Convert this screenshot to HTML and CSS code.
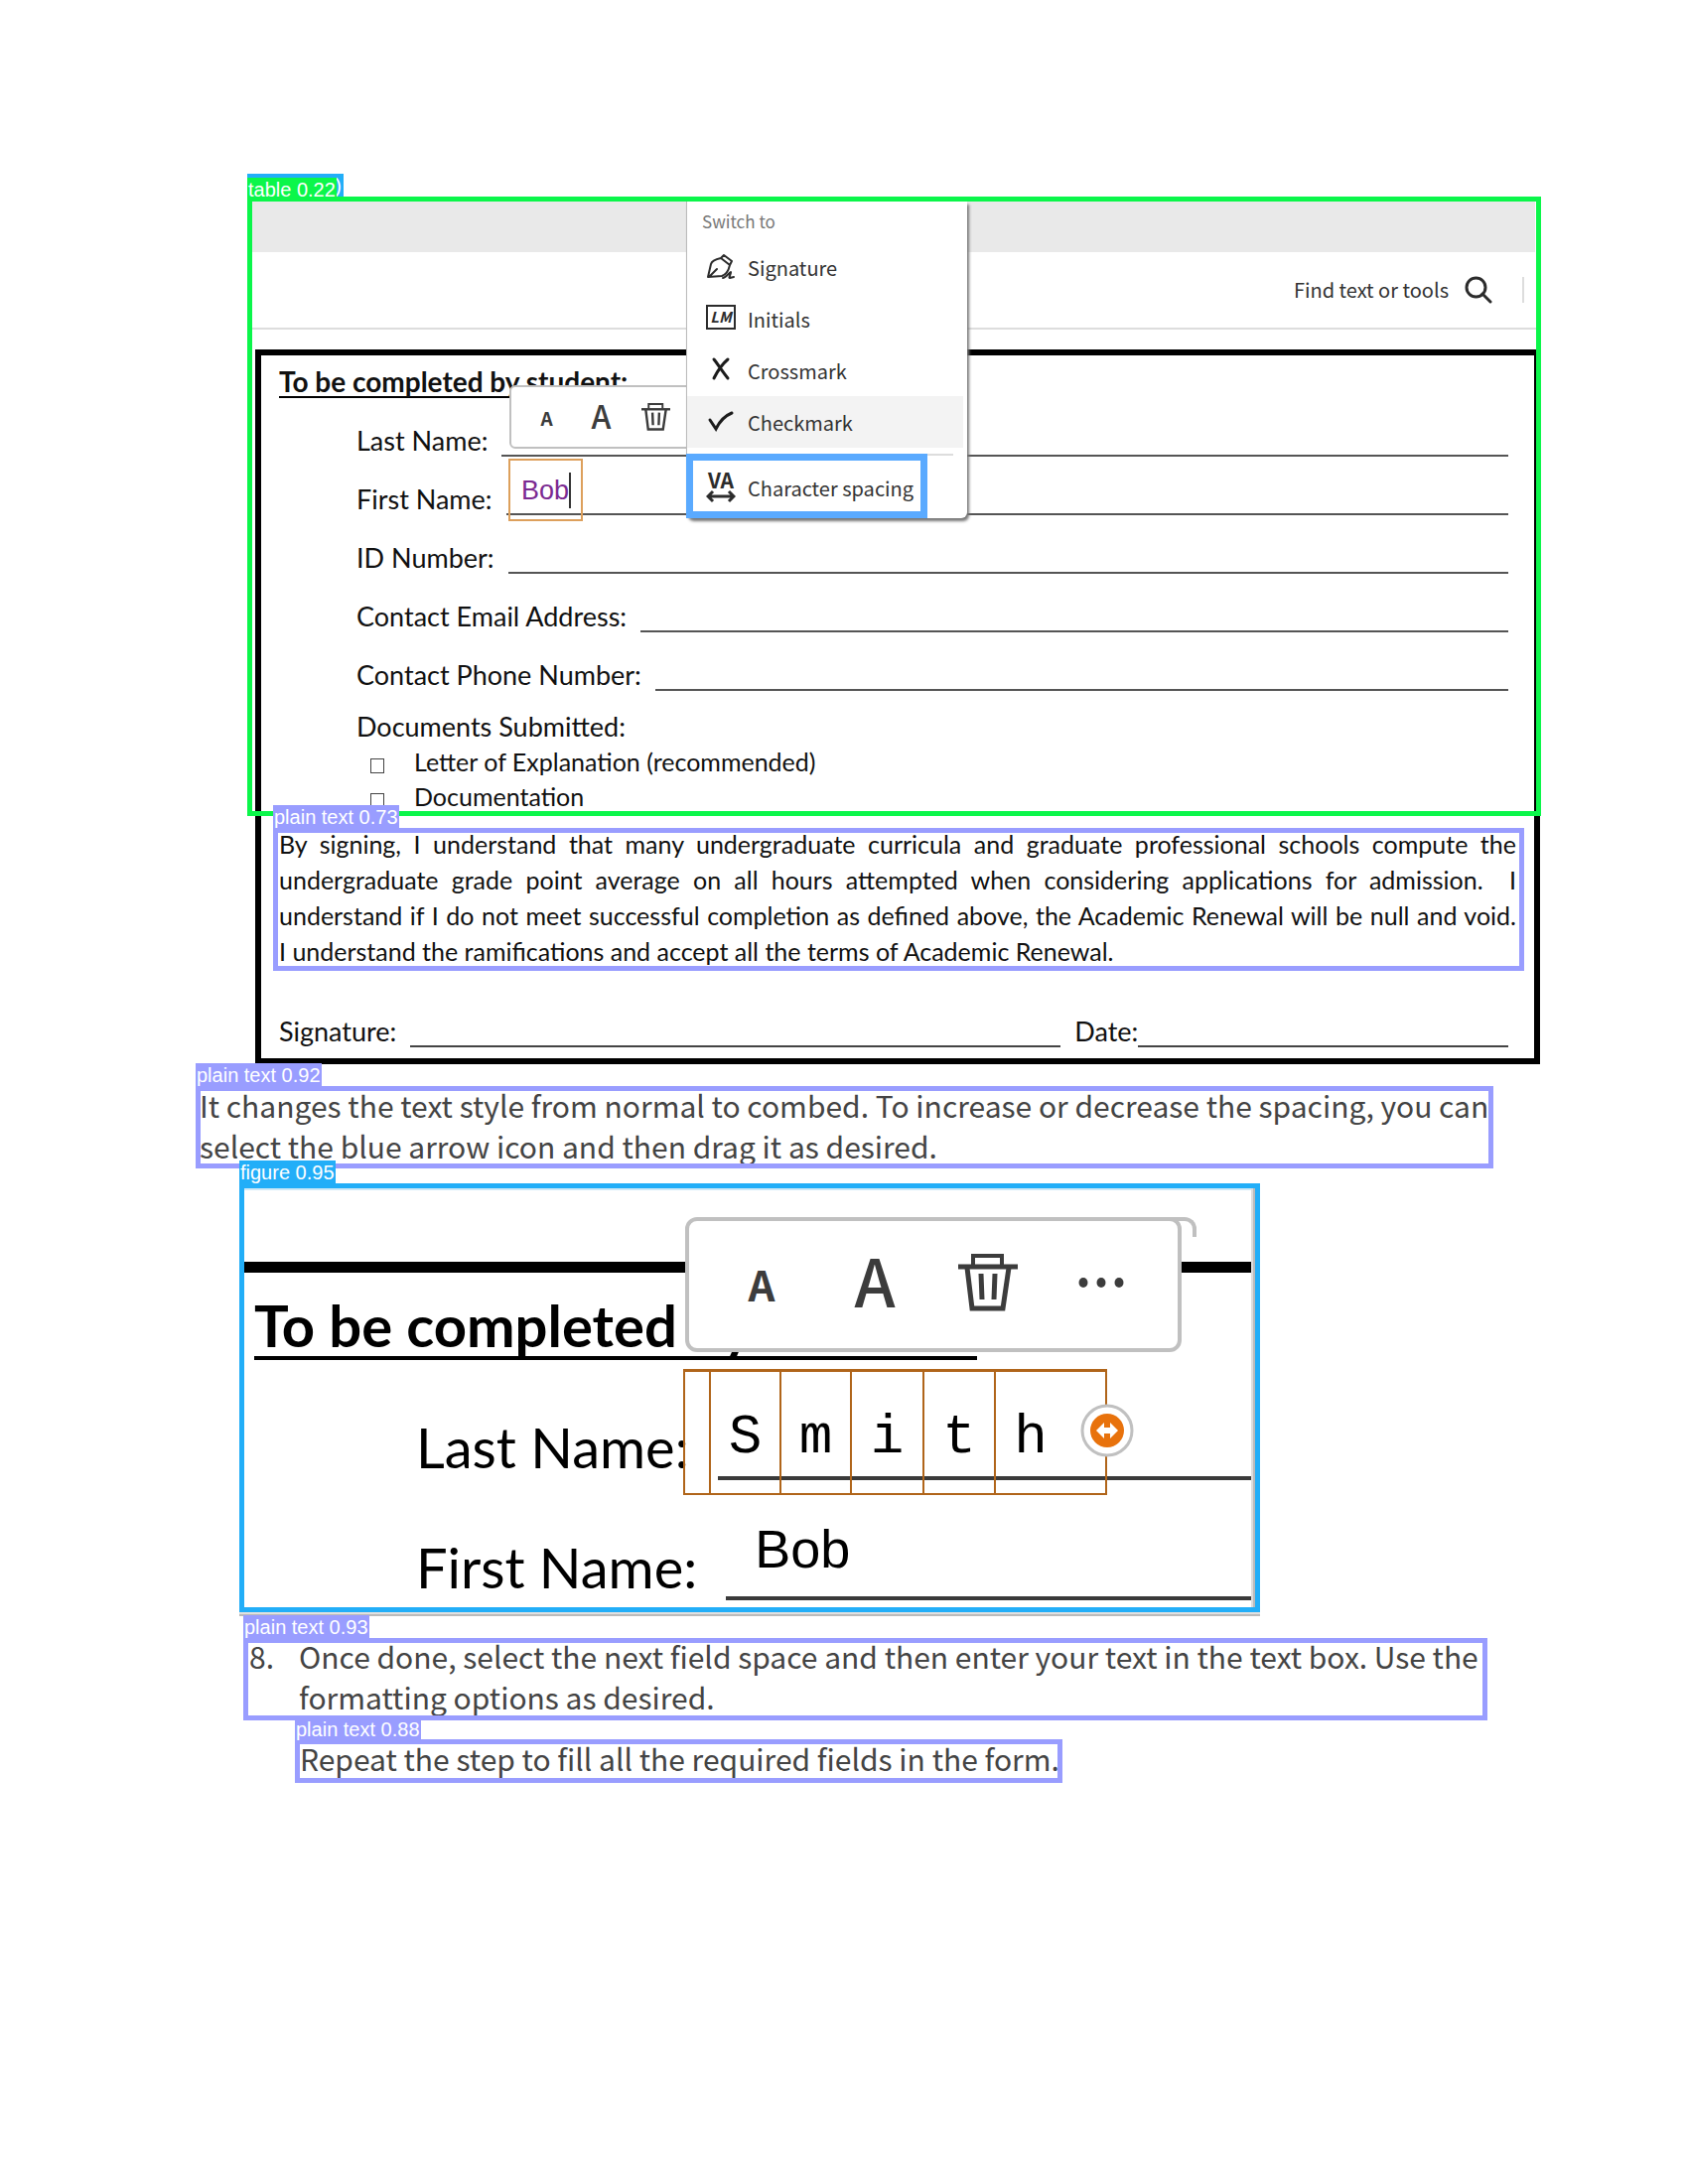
FILE: index.html
```html
<!DOCTYPE html>
<html lang="en">
<head>
<meta charset="utf-8">
<title>Fill and sign: character spacing</title>
<link rel="stylesheet" href="styles.css">
</head>
<body>
<svg class="sprite" aria-hidden="true">
  <symbol id="trash" viewBox="0 0 60 58">
    <g fill="none" stroke="#3c3c3c" stroke-width="4">
      <path d="M15 12V2H44V12"/>
      <path d="M0 13H60" stroke-width="5"/>
      <path d="M9 14L14 55H45L51 14" stroke-width="5"/>
      <path d="M23 20L24 46M37 20L36 46" stroke-width="5"/>
    </g>
  </symbol>
</svg>
<main class="page">

  <section class="form-shot">
    <div class="title-band"></div>
    <div class="menu-bar">
      <button class="find" type="button">Find text or tools
        <svg width="28" height="28" viewBox="0 0 28 28" fill="none" stroke="#2c2c2c" stroke-width="3"><circle cx="11.500" cy="11.500" r="9.500"/><path d="M18 18L26 26" stroke-linecap="round"/></svg>
      </button>
      <span class="divider"></span>
    </div>

    <form class="sheet">
      <h2 class="sheet-title">To be completed by student:</h2>
      <div class="fields">
        <div class="field"><label for="last">Last Name:</label><input id="last" type="text"></div>
        <div class="field"><label for="first">First Name:</label><input id="first" type="text"></div>
        <div class="field"><label for="idn">ID Number:</label><input id="idn" type="text"></div>
        <div class="field"><label for="email">Contact Email Address:</label><input id="email" type="text"></div>
        <div class="field"><label for="phone">Contact Phone Number:</label><input id="phone" type="text"></div>
        <p class="docs-title">Documents Submitted:</p>
        <div class="doc"><input id="letter" type="checkbox"><label for="letter">Letter of Explanation (recommended)</label></div>
        <div class="doc"><input id="docu" type="checkbox"><label for="docu">Documentation</label></div>
      </div>
      <div class="terms">
        <p>
          <span>By signing, I understand that many undergraduate curricula and graduate professional schools compute the</span>
          <span>undergraduate grade point average on all hours attempted when considering applications for admission.&nbsp; I</span>
          <span>understand if I do not meet successful completion as defined above, the Academic Renewal will be null and void.</span>
          <span>I understand the ramifications and accept all the terms of Academic Renewal.</span>
        </p>
        <div class="mark mark-terms"><span class="tag">plain text 0.73</span></div>
      </div>
      <div class="sign-row">
        <label for="sig">Signature:</label><input id="sig" class="sig" type="text">
        <label for="date">Date:</label><input id="date" class="date" type="text">
      </div>
    </form>

    <div class="bar bar-small">
      <button type="button" class="a-small">A</button>
      <button type="button" class="a-big">A</button>
      <button type="button" aria-label="Delete"><svg width="29" height="28"><use href="#trash"/></svg></button>
    </div>
    <div class="typed"><span>Bob</span></div>

    <div class="menu">
      <p class="menu-head">Switch to</p>
      <button type="button"><svg width="30" height="30" viewBox="0 0 30 30" fill="none" stroke="#2c2c2c" stroke-width="2" stroke-linejoin="round" stroke-linecap="round"><path d="M2 25L5 12Q6 8 15 6L24 13Q22 22 16 24Z M3 25L11 17 M15 6L18 3L26 9L24 13"/><path d="M17 26C21 25 24 20 25 20C26 21 22 26 24 26L28 25"/></svg>Signature</button>
      <button type="button"><svg width="30" height="30" viewBox="0 0 30 30"><rect x="1" y="2" width="28" height="23" fill="none" stroke="#2c2c2c" stroke-width="2"/><text x="15" y="19" text-anchor="middle" class="lm">LM</text></svg>Initials</button>
      <button type="button"><svg width="30" height="30" viewBox="0 0 30 30" fill="none" stroke="#1c1c1c" stroke-width="2" stroke-linecap="round"><path d="M8 4C12 9 17 17 22 23M22 4C16 9 11 17 8 23" stroke-width="3"/></svg>Crossmark</button>
      <button type="button" class="hover"><svg width="30" height="30" viewBox="0 0 30 30" fill="none" stroke="#1c1c1c" stroke-width="3" stroke-linecap="round"><path d="M4 13L10 22Q16 10 26 6"/></svg>Checkmark</button>
      <hr>
      <button type="button" class="boxed"><svg width="30" height="34" viewBox="0 0 30 34" fill="none" stroke="#2c2c2c" stroke-width="2"><text x="15" y="18" text-anchor="middle" class="va">VA</text><path d="M2 26H28M7 21L2 26L7 31M23 21L28 26L23 31" stroke-width="3"/></svg>Character spacing</button>
    </div>

    <div class="mark mark-table"><span class="tag tag-under">)</span><span class="tag tag-table">table 0.22</span></div>
  </section>

  <div class="note">
    <p>It changes the text style from normal to combed. To increase or decrease the spacing, you can select the blue arrow icon and then drag it as desired.</p>
    <div class="mark mark-note"><span class="tag">plain text 0.92</span></div>
  </div>

  <figure class="zoomed">
    <div class="rule"></div>
    <h2 class="zoomed-title">To be completed by student:</h2>
    <div class="big-field"><label for="last2">Last Name:</label><input id="last2" type="text"></div>
    <div class="big-field"><label for="first2">First Name:</label><input id="first2" type="text" value="Bob"></div>
    <div class="edge"></div>
    <div class="corner"></div>
    <div class="bar bar-large">
      <button type="button" class="a-small">A</button>
      <button type="button" class="a-big">A</button>
      <button type="button" aria-label="Delete"><svg width="60" height="58"><use href="#trash"/></svg></button>
      <button type="button" aria-label="More"><svg width="48" height="12" viewBox="0 0 48 12" fill="#3c3c3c"><ellipse cx="6" cy="6" rx="4.500" ry="5"/><ellipse cx="24" cy="6" rx="4.500" ry="5"/><ellipse cx="42" cy="6" rx="4.500" ry="5"/></svg></button>
    </div>
    <div class="comb">
      <span></span><span>S</span><span>m</span><span>i</span><span>t</span><span>h</span>
      <button type="button" class="handle" aria-label="Adjust spacing"><svg width="54" height="54" viewBox="0 0 54 54"><circle cx="27" cy="27" r="25" fill="#fff" stroke="#c0c0c0" stroke-width="3"/><circle cx="27" cy="27" r="17" fill="#e8720c"/><path d="M16 27L24 19V24H30V19L38 27L30 35V30H24V35Z" fill="#fff"/></svg></button>
    </div>
    <div class="mark-label tag">figure 0.95</div>
  </figure>

  <div class="step">
    <ol start="8"><li><span>8.</span><p>Once done, select the next field space and then enter your text in the text box. Use the formatting options as desired.</p></li></ol>
    <div class="mark mark-step"><span class="tag">plain text 0.93</span></div>
  </div>

  <div class="repeat">
    <p>Repeat the step to fill all the required fields in the form.</p>
    <div class="mark mark-repeat"><span class="tag">plain text 0.88</span></div>
  </div>
</main>
</body>
</html>
```
FILE: styles.css
```css
* { box-sizing: border-box; }
body { margin: 0; background: #fff; color: #111; font-family: "Noto Sans CJK SC", "Open Sans", sans-serif; }
h2, p, ol, figure { margin: 0; padding: 0; }
button { border: 0; padding: 0; background: none; color: inherit; font: inherit; }
input { appearance: none; border: 0; border-radius: 0; padding: 0; margin: 0; background: none; color: inherit; min-width: 0; }
.sprite { display: none; }

.page { padding: 198px 149px 100px 197px; }

/* Annotation boxes and their tags */
.mark { position: absolute; border: 5px solid #999dff; pointer-events: none; }
.tag {
  position: absolute; left: -5px; bottom: 100%; margin-bottom: 5px; height: 23px;
  padding: 2px 1px 0 1px; background: #999dff; color: #fff; white-space: nowrap;
  font: 20px/21px "Liberation Sans", sans-serif;
}

/* First screenshot */
.form-shot { position: relative; margin-left: 52px; padding: 5px 0 0 5px; }
.title-band { height: 51px; background: #e9e9e9; margin-right: 5px; }
.menu-bar {
  display: flex; justify-content: flex-end; align-items: center; gap: 30px;
  height: 78px; padding-right: 16px; border-bottom: 2px solid #ddd;
}
.find { display: flex; align-items: center; gap: 16px; font-size: 20px; line-height: 30px; color: #333; }
.divider { width: 2px; height: 26px; background: #ddd; }
.mark-table { inset: 0 -1px 250px 0; border-color: #0bf64a; }
.tag-table { background: #0bf64a; height: 19px; margin-bottom: 0; bottom: calc(100% + 5px); }
.tag-under { background: #22aef8; width: 97px; text-align: right; padding-right: 2px; }

.sheet { margin: 20px 0 0 3px; padding: 11px 18px; border: 6px solid #000; font-family: Lato, "Open Sans", sans-serif; }
.sheet-title { display: table; font-size: 28px; line-height: 30px; border-bottom: 2px solid #000; }
.fields { padding: 0 8px 0 78px; font-size: 27px; }
.field { display: flex; align-items: flex-end; gap: 14px; height: 59px; }
.field label { line-height: 30px; padding-bottom: 1px; }
.field input { flex: 1; height: 30px; border-bottom: 2px solid #555; }
.docs-title { margin-top: 18px; line-height: 36px; }
.doc { display: flex; align-items: flex-end; gap: 30px; padding-left: 14px; font-size: 25px; line-height: 35px; }
.doc input { width: 14px; height: 15px; margin-bottom: 6px; border: 1px solid #444; }
.terms { position: relative; margin: 12px 0 0; font-size: 25px; line-height: 36px; text-align: justify; }
.terms p span { display: block; text-align-last: justify; }
.terms p span:last-child { text-align-last: left; }
.mark-terms { z-index: 1; inset: 2px -8px -2px -6px; }
.sign-row { display: flex; align-items: flex-end; height: 79px; padding-right: 8px; font-size: 27px; line-height: 30px; }
.sign-row label { padding-bottom: 1px; }
.sign-row input { height: 30px; border-bottom: 2px solid #444; }
.sig { flex: 650; margin: 0 14px; }
.date { flex: 370; }

/* Formatting bars */
.bar { position: absolute; display: flex; align-items: center; background: #fff; color: #3c3c3c; font-weight: 500; }
.bar button { flex: none; display: flex; align-items: center; justify-content: center; }
.bar .a-small { font-weight: 700; }
.bar-small { left: 264px; top: 190px; width: 190px; height: 64px; padding-left: 8px; border: 2px solid #c0c0c0; border-radius: 6px; }
.bar-small button { width: 55px; height: 44px; }
.bar-small .a-small { font-size: 19px; }
.bar-small .a-big { font-size: 32px; padding-bottom: 4px; }
.bar-large { left: 444px; top: 29px; width: 500px; height: 136px; padding: 0 0 4px 16px; border: 4px solid #c0c0c0; border-radius: 12px; }
.bar-large button { width: 114px; height: 90px; }
.bar-large .a-small { font-size: 42px; }
.bar-large .a-big { font-size: 66px; padding-bottom: 8px; }

.typed { position: absolute; left: 263px; top: 264px; width: 75px; height: 63px; padding: 12px 0 0 11px; border: 2px solid #dda05c; }
.typed span { display: inline-block; border-right: 2px solid #333; color: #7b2a91; font: 27px/36px "Liberation Sans", sans-serif; }

/* Switch-to menu */
.menu {
  position: absolute; left: 442px; top: 5px; width: 283px; padding-top: 8px;
  background: #fff; border-left: 1px solid #bbb; border-radius: 0 0 6px 6px; box-shadow: 2px 3px 3px #777;
  color: #333; font-size: 20px;
}
.menu-head { padding: 0 0 8px 15px; color: #777; font-size: 17px; line-height: 24px; }
.menu button { display: flex; align-items: center; gap: 12px; width: 278px; height: 52px; padding-left: 19px; text-align: left; }
.menu .hover { background: #f3f3f3; }
.menu hr { height: 2px; margin: 6px 14px 0 0; border: 0; background: #ddd; }
.menu .boxed { position: relative; width: 243px; height: 65px; margin: -2px 0 0 -1px; padding: 3px 0 0 13px; border: 7px solid #5aaaff; background: #fff; white-space: nowrap; }
.lm { font: italic bold 15px "Noto Sans CJK SC", sans-serif; fill: #2c2c2c; stroke: none; }
.va { font: bold 21px "Noto Sans CJK SC", sans-serif; fill: #2c2c2c; stroke: none; }

/* Body text */
.note, .step, .repeat { position: relative; color: #444; font-size: 30px; line-height: 41px; }
.note { margin-top: 21px; padding-left: 4px; }
.mark-note { inset: 1px 47px -2px 0; }
.note p { padding-right: 44px; }
.step { margin: 24px 0 0 48px; }
.step ol { list-style: none; }
.step li { display: grid; grid-template-columns: 50px 1fr; padding: 0 46px 0 6px; }
.mark-step { inset: 2px 53px -3px 0; }
.repeat { width: fit-content; margin: 21px 0 0 100px; padding: 0 3px 0 5px; }
.mark-repeat { inset: 1px 0 -4px 0; }
.repeat .tag { height: 19px; padding-top: 0; line-height: 19px; }

/* Enlarged screenshot */
.zoomed { position: relative; max-width: 1028px; margin: 17px 0 0 44px; border: 5px solid #22aef8; box-shadow: 0 2px #e0e0e0, 0 4px #bbb; color: #000; font-family: Lato, "Open Sans", sans-serif; }
.mark-label { background: #22aef8; }
.rule { height: 85px; border-top: 2px solid #cfe9f7; border-bottom: 11px solid #000; }
.zoomed-title { display: table; margin: 21px 0 0 10px; font-size: 58px; line-height: 63px; border-bottom: 4px solid #000; }
.big-field { display: flex; align-items: flex-end; gap: 29px; height: 121px; padding-left: 173px; font-size: 56px; }
.big-field label { line-height: 60px; padding-bottom: 3px; white-space: nowrap; }
.big-field input { flex: 1; height: 82px; padding: 0 0 18px 29px; border-bottom: 4px solid #3a3a3a; font: 54px/60px "Liberation Sans", sans-serif; }
.edge { height: 7px; }
.edge::before { content: ""; box-sizing: border-box; position: absolute; top: 0; right: 0; bottom: 0; width: 4px; background: #ddd; border-right: 2px solid #bbb; }
.bar-large, .bar-small { font-family: "Noto Sans CJK SC", sans-serif; }
.corner { position: absolute; left: 920px; top: 29px; width: 39px; height: 20px; border: solid #c0c0c0; border-width: 4px 4px 0 0; border-radius: 0 12px 0 0; }
.comb {
  position: absolute; left: 442px; top: 182px; width: 427px; height: 127px;
  display: grid; grid-template-columns: 24px 71px 71px 73px 72px 72px;
  border: 2px solid #b0651a; border-top-width: 3px;
}
.comb span { padding-top: 10px; text-align: center; font: 56px/112px "Liberation Mono", monospace; }
.comb span + span { border-left: 2px solid #b0651a; }
.handle { position: absolute; right: -29px; top: 32px; width: 54px; height: 54px; }
```
